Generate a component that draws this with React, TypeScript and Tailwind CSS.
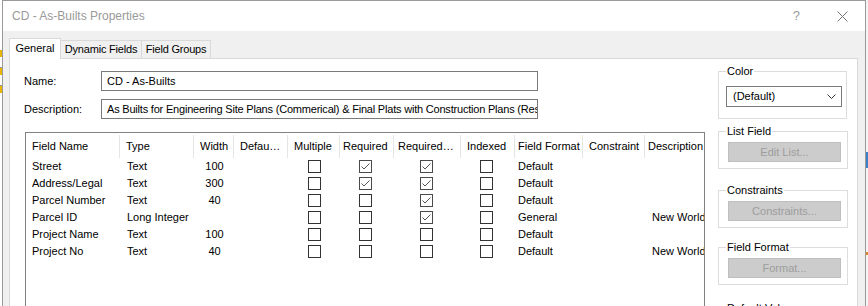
import React from "react";

const font = { fontFamily: '"Liberation Sans", Arial, sans-serif' };

const cols = [
  { name: "Field Name", w: "w-[94px]", pl: "pl-[6px]" },
  { name: "Type", w: "w-[74px]", pl: "pl-[6px]" },
  { name: "Width", w: "w-[40px]", pl: "pl-[6px]" },
  { name: "Defau…", w: "w-[54px]", pl: "pl-[6px]" },
  { name: "Multiple", w: "w-[52px]", pl: "pl-[6px]" },
  { name: "Required", w: "w-[54px]", pl: "pl-[3px]" },
  { name: "Required…", w: "w-[67px]", pl: "pl-[4px]" },
  { name: "Indexed", w: "w-[54px]", pl: "pl-[6px]" },
  { name: "Field Format", w: "w-[68px]", pl: "pl-[3px]" },
  { name: "Constraint", w: "w-[62px]", pl: "pl-[6px]" },
  { name: "Description", w: "w-[80px]", pl: "pl-[3px]" },
];

const rows = [
  { name: "Street", type: "Text", width: "100", req: true, req2: true, fmt: "Default", desc: "" },
  { name: "Address/Legal", type: "Text", width: "300", req: true, req2: true, fmt: "Default", desc: "" },
  { name: "Parcel Number", type: "Text", width: "40", req: false, req2: true, fmt: "Default", desc: "" },
  { name: "Parcel ID", type: "Long Integer", width: "", req: false, req2: true, fmt: "General", desc: "New World" },
  { name: "Project Name", type: "Text", width: "100", req: false, req2: false, fmt: "Default", desc: "" },
  { name: "Project No", type: "Text", width: "40", req: false, req2: false, fmt: "Default", desc: "New World" },
];

function Check({ on }: { on: boolean }) {
  return (
    <div className={`w-[13px] h-[13px] border bg-white ${on ? "border-[#4a4a4a]" : "border-[#333]"}`}>
      {on && (
        <svg width="11" height="11" viewBox="0 0 11 11">
          <path d="M1.5 5.5 L4 8 L9.5 2.5" fill="none" stroke="#555" strokeWidth="1" />
        </svg>
      )}
    </div>
  );
}

function Group({ label, mt, children, w = "w-[130px]" }: { label: string; mt: string; children?: React.ReactNode; w?: string }) {
  return (
    <fieldset className={`${mt} ${w} border border-[#dcdcdc] pb-[6px]`}>
      <legend className="ml-[7px] px-[1px] leading-[14px] text-black">{label}</legend>
      {children}
    </fieldset>
  );
}

function DisabledButton({ text }: { text: string }) {
  return (
    <div className="mt-[4px] ml-[9px] w-[113px] h-[20px] bg-[#cccccc] border border-[#bfbfbf] flex items-center justify-center text-[#9d9d9d]">
      {text}
    </div>
  );
}

export default function App() {
  return (
    <div className="flex w-[868px] h-[306px] overflow-hidden bg-white text-[11px] text-black" style={font}>
      {/* background app peeking on the left */}
      <div className="w-[2px] flex flex-col bg-white">
        <div className="h-[50px]" />
        <div className="h-[7px] bg-[#e8b400]" />
        <div className="h-[11px] border-b border-[#999]" />
        <div className="h-[7px] bg-[#e8b400]" />
        <div className="h-[11px] border-b border-[#999]" />
        <div className="h-[7px] bg-[#e8b400]" />
      </div>

      {/* dialog */}
      <div className="w-[864px] flex flex-col border-l border-t border-r border-[#9a9a9a]">
        <div className="h-[30px] shrink-0 bg-white flex items-center">
          <span className="pl-[9px] text-[12px] text-[#9a9a9a]">CD - As-Builts Properties</span>
          <span className="ml-auto text-[13px] text-[#9a9a9a]">?</span>
          <svg className="ml-[37px] mr-[17px]" width="11" height="11" viewBox="0 0 11 11">
            <path d="M0.5 0.5 L10.5 10.5 M10.5 0.5 L0.5 10.5" stroke="#777" strokeWidth="1" />
          </svg>
        </div>

        <div className="flex-1 bg-[#f0f0f0] pl-[6px] pt-[7px] flex flex-col">
          {/* tabs */}
          <div className="flex items-end h-[20px] relative z-10">
            <div className="w-[52px] h-[21px] -mb-[1px] bg-white border-l border-t border-r border-[#d9d9d9] flex items-center justify-center pb-[1px]">
              General
            </div>
            <div className="w-[81px] h-[18px] border-t border-r border-[#d9d9d9] flex items-center justify-center tracking-[-0.2px]">
              Dynamic Fields
            </div>
            <div className="w-[69px] h-[18px] border-t border-r border-[#d9d9d9] flex items-center justify-center tracking-[-0.2px]">
              Field Groups
            </div>
          </div>

          {/* panel */}
          <div className="w-[849px] flex-1 bg-white border border-[#d9d9d9] pl-[14px] pt-[5px] flex gap-[13px]">
            <div className="w-[681px] pt-[7px] flex flex-col">
              <div className="flex items-center h-[20px]">
                <span className="w-[77px]">Name:</span>
                <div className="w-[437px] h-[20px] border border-[#7a7a7a] flex items-center pl-[5px]">
                  CD - As-Builts
                </div>
              </div>
              <div className="flex items-center h-[20px] mt-[8px]">
                <span className="w-[77px]">Description:</span>
                <div className="w-[437px] h-[20px] border border-[#7a7a7a] flex items-center pl-[5px] pr-[2px] overflow-hidden whitespace-nowrap tracking-[-0.2px]">
                  As Builts for Engineering Site Plans (Commerical) &amp; Final Plats with Construction Plans (Residential)
                </div>
              </div>

              {/* list view */}
              <div className="ml-[1px] mt-[13px] w-[680px] h-[200px] border border-[#828282] overflow-hidden">
                <div className="flex h-[25px] whitespace-nowrap">
                  {cols.map((c) => (
                    <div key={c.name} className={`${c.w} ${c.pl} shrink-0 mt-[2px] h-[23px] flex items-center border-r border-[#e5e5e5]`}>
                      {c.name}
                    </div>
                  ))}
                </div>
                {rows.map((r) => (
                  <div key={r.name} className="flex h-[17px] items-center whitespace-nowrap">
                    <div className="w-[94px] shrink-0 pl-[6px]">{r.name}</div>
                    <div className="w-[74px] shrink-0 pl-[7px]">{r.type}</div>
                    <div className="w-[40px] shrink-0 text-center pl-[1px]">{r.width}</div>
                    <div className="w-[54px] shrink-0" />
                    <div className="w-[52px] shrink-0 pl-[20px]"><Check on={false} /></div>
                    <div className="w-[54px] shrink-0 pl-[19px]"><Check on={r.req} /></div>
                    <div className="w-[67px] shrink-0 pl-[26px]"><Check on={r.req2} /></div>
                    <div className="w-[54px] shrink-0 pl-[19px]"><Check on={false} /></div>
                    <div className="w-[68px] shrink-0 pl-[3px]">{r.fmt}</div>
                    <div className="w-[62px] shrink-0" />
                    <div className="w-[80px] shrink-0 pl-[7px]">{r.desc}</div>
                  </div>
                ))}
              </div>
            </div>

            {/* right side group boxes */}
            <div className="w-[130px] flex flex-col">
              <Group label="Color" mt="mt-0" w="w-[129px]">
                <div className="mt-[8px] ml-[7px] mb-[5px] w-[116px] h-[21px] border border-[#7a7a7a] flex items-center pl-[6px] pr-[5px]">
                  <span>(Default)</span>
                  <svg className="ml-auto" width="9" height="5" viewBox="0 0 9 5">
                    <path d="M0.5 0.5 L4.5 4.5 L8.5 0.5" fill="none" stroke="#333" strokeWidth="1" />
                  </svg>
                </div>
              </Group>
              <Group label="List Field" mt="mt-[5px]">
                <DisabledButton text="Edit List..." />
              </Group>
              <Group label="Constraints" mt="mt-[14px]">
                <DisabledButton text="Constraints..." />
              </Group>
              <Group label="Field Format" mt="mt-[12px]">
                <DisabledButton text="Format..." />
              </Group>
              <Group label="Default Value" mt="mt-[16px]">
                <DisabledButton text="" />
              </Group>
            </div>
          </div>
        </div>
      </div>

      {/* background app peeking on the right */}
      <div className="w-[2px] flex flex-col bg-[#f4f4f4]">
        <div className="h-[152px]" />
        <div className="h-[16px] bg-[#3d7fc9]" />
        <div className="h-[84px]" />
        <div className="h-[3px] bg-[#d98a2b]" />
      </div>
    </div>
  );
}
